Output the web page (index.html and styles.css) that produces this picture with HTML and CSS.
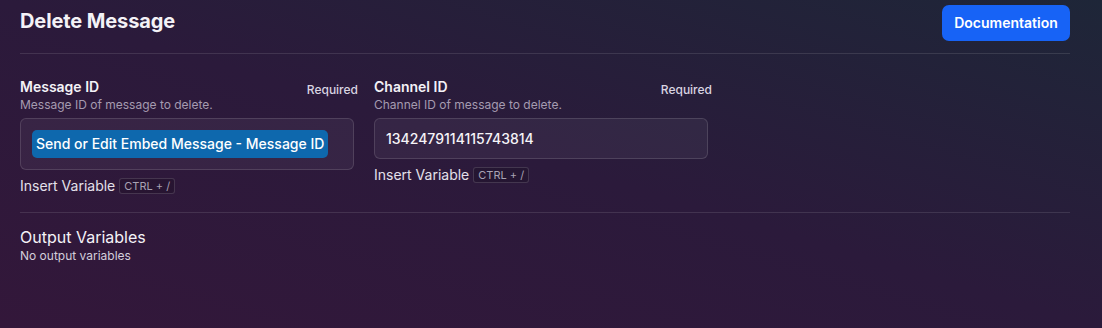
FILE: index.html
```html
<!DOCTYPE html>
<html>
<head>
<meta charset="utf-8">
<link rel="stylesheet" href="styles.css">
</head>
<body>
<div class="page">
  <header class="head">
    <h1 class="title">Delete Message</h1>
    <button class="doc-btn">Documentation</button>
  </header>
  <hr class="divider">
  <section class="fields">
    <div class="field">
      <div class="field-top">
        <div>
          <div class="label">Message ID</div>
          <div class="desc">Message ID of message to delete.</div>
        </div>
        <span class="req">Required</span>
      </div>
      <div class="input input-chip"><span class="chip">Send or Edit Embed Message - Message ID</span></div>
      <div class="insert">Insert Variable <kbd class="kbd">CTRL + /</kbd></div>
    </div>
    <div class="field">
      <div class="field-top">
        <div>
          <div class="label">Channel ID</div>
          <div class="desc">Channel ID of message to delete.</div>
        </div>
        <span class="req">Required</span>
      </div>
      <div class="input">1342479114115743814</div>
      <div class="insert">Insert Variable <kbd class="kbd">CTRL + /</kbd></div>
    </div>
  </section>
  <hr class="divider divider2">
  <section class="outputs">
    <div class="out-title">Output Variables</div>
    <div class="out-desc">No output variables</div>
  </section>
</div>
</body>
</html>
```
FILE: styles.css
```css
* { box-sizing: border-box; }
html, body { margin: 0; height: 100%; }
body {
  font-family: Inter, "Noto Sans", sans-serif;
  color: #f4f2f7;
  background: linear-gradient(to top right, #33173a 0%, #2b1a3b 50%, #1e2638 100%);
  width: 1102px;
  height: 328px;
  overflow: hidden;
}
.page { padding: 0 32px 0 20px; }
.head {
  display: flex;
  justify-content: space-between;
  align-items: center;
  height: 46px;
}
.title {
  margin: 0;
  font-size: 20px;
  font-weight: 700;
  line-height: 24px;
  margin-top: -4px;
  letter-spacing: -0.1px;
}
.doc-btn {
  font-family: inherit;
  background: #1763f6;
  color: #fff;
  border: none;
  border-radius: 7px;
  font-size: 14px;
  font-weight: 600;
  height: 36px;
  width: 128px;
  padding: 0;
  margin-top: -1px;
  cursor: pointer;
}
.divider {
  border: none;
  height: 1px;
  background: rgba(255,255,255,0.11);
  margin: 7px 0 0 0;
}
.fields {
  display: grid;
  grid-template-columns: 334px 334px;
  column-gap: 20px;
  padding-top: 24px;
  align-items: start;
}
.field-top {
  display: flex;
  justify-content: space-between;
  align-items: flex-start;
}
.label {
  font-size: 14px;
  font-weight: 600;
  line-height: 17px;
}
.desc {
  font-size: 12px;
  color: #a59bb0;
  line-height: 16px;
  margin-top: 2px;
}
.req {
  font-size: 12px;
  font-weight: 500;
  color: #d9d4e2;
  margin-top: 4px;
  margin-right: -4px;
}
.input {
  margin-top: 5px;
  height: 41px;
  border-radius: 6px;
  border: 1px solid rgba(255,255,255,0.13);
  background: rgba(255,255,255,0.05);
  font-size: 14px;
  font-weight: 500;
  display: flex;
  align-items: center;
  padding: 0 11px;
  color: #f6f4f8;
}
.input-chip { height: 52px; }
.chip {
  background: #0e68ad;
  color: #fff;
  border-radius: 5px;
  height: 28px;
  line-height: 28px;
  padding: 0 4px;
  font-size: 14px;
  font-weight: 500;
}
.insert {
  margin-top: 7px;
  font-size: 14px;
  color: #e4e0ea;
  display: flex;
  align-items: center;
  gap: 4px;
  line-height: 18px;
}
.kbd {
  font-family: inherit;
  font-size: 11px;
  color: #a8a2b3;
  border: 1px solid rgba(255,255,255,0.14);
  background: rgba(0,0,0,0.15);
  border-radius: 3px;
  padding: 0 4px;
  line-height: 14px;
}
.divider2 { margin-top: 17px; }
.outputs { padding-top: 15px; }
.out-title {
  font-size: 16px;
  font-weight: 400;
  line-height: 19px;
}
.out-desc {
  font-size: 12px;
  color: #d3cedb;
  line-height: 15px;
  margin-top: 1px;
}
```
